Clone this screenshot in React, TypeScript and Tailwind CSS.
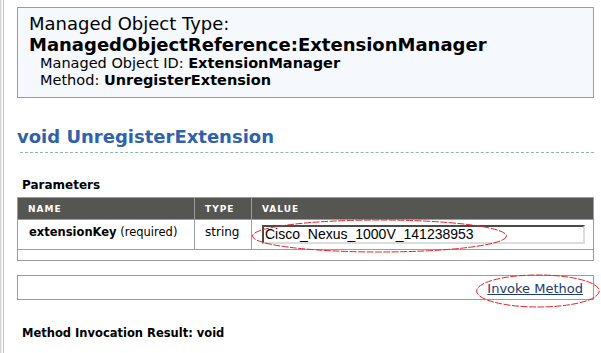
import React from 'react'

const verdana = "font-['DejaVu_Sans',Verdana,sans-serif]"

const Annotations = () => (
  <svg
    className="absolute inset-0 pointer-events-none"
    width={601}
    height={353}
    viewBox="0 0 601 353"
  >
    <ellipse
      cx={379.5}
      cy={236}
      rx={127}
      ry={16}
      fill="none"
      stroke="#e3222b"
      strokeWidth={1}
      strokeDasharray="7 1.5"
    />
    <ellipse
      cx={538}
      cy={291}
      rx={61.3}
      ry={16}
      fill="none"
      stroke="#e3222b"
      strokeWidth={1}
      strokeDasharray="7 1.5"
    />
  </svg>
)

const ObjectHeader = () => (
  <div className="h-[91px] border border-[#9c9c9c] bg-[#f5f8fd] pl-[11px] pt-[5px] text-black">
    <div className="text-[18px] leading-[21px]">Managed Object Type:</div>
    <div className="text-[18px] leading-[21px] font-bold">
      ManagedObjectReference:ExtensionManager
    </div>
    <div className="pl-[11px] text-[14.5px] leading-[16px]">
      <div>
        Managed Object ID: <span className="font-bold">ExtensionManager</span>
      </div>
      <div className="mt-px">
        Method: <span className="font-bold">UnregisterExtension</span>
      </div>
    </div>
  </div>
)

const ParamsTable = () => (
  <div className="mt-[4px] border border-[#9c9c9c]">
    <div className="flex h-[22px] bg-[#555651] text-white text-[9px] font-bold tracking-[1px] leading-[22px] border-b border-[#9c9c9c]">
      <div className="w-[177px] pl-[10px] border-r border-[#9c9c9c]">NAME</div>
      <div className="w-[57px] pl-[10px] border-r border-[#9c9c9c]">TYPE</div>
      <div className="flex-1 pl-[10px]">VALUE</div>
    </div>
    <div className="flex h-[30px] border-b border-[#9c9c9c] text-black">
      <div className="w-[177px] pl-[11px] pt-[5px] text-[11.5px] leading-[15px] border-r border-[#9c9c9c]">
        <span className="font-bold">extensionKey</span> (required)
      </div>
      <div className="w-[57px] pl-[10px] pt-[5px] text-[12px] leading-[15px] border-r border-[#9c9c9c]">
        string
      </div>
      <div className="flex-1 pl-[10px] pt-[5px]">
        <div className="w-[323px] h-[19px] pl-px border-2 border-t-[#4a4a4a] border-l-[#4a4a4a] border-r-[#dcdcdc] border-b-[#dcdcdc] bg-white text-[14px] leading-[15px] text-black font-['Liberation_Sans',Arial,sans-serif] whitespace-nowrap">
          Cisco_Nexus_1000V_141238953
        </div>
      </div>
    </div>
    <div className="h-[10px]" />
  </div>
)

export default function App() {
  return (
    <div className={`relative w-[601px] h-[353px] overflow-hidden bg-white flex ${verdana}`}>
      <div className="w-px bg-[#d4d4d4]" />
      <div className="w-px bg-[#ededed]" />
      <div className="w-px bg-white" />
      <div className="w-px bg-[#c4c4c4]" />
      <div className="flex-1 pl-[13px] pr-[7px] pt-[7px]">
        <ObjectHeader />

        <h1 className="mt-[28px] text-[18px] leading-[22px] font-bold text-[#2f62ab]">
          void UnregisterExtension
        </h1>
        <div className="ml-[3px] mt-[4px] border-t border-dashed border-[#8fb3ad]" />

        <h2 className="mt-[25px] pl-[5px] text-[12px] leading-[15px] font-bold text-black">
          Parameters
        </h2>
        <ParamsTable />

        <div className="mt-[14px] h-[25px] border border-[#9c9c9c] flex justify-end pr-[10px]">
          <a
            href="#"
            className="pt-[2px] text-[13px] leading-[21px] text-[#1b3a72] underline"
          >
            Invoke Method
          </a>
        </div>

        <h2 className="mt-[26px] pl-[5px] text-[11.5px] leading-[15px] font-bold text-black">
          Method Invocation Result: void
        </h2>
      </div>
      <Annotations />
    </div>
  )
}
